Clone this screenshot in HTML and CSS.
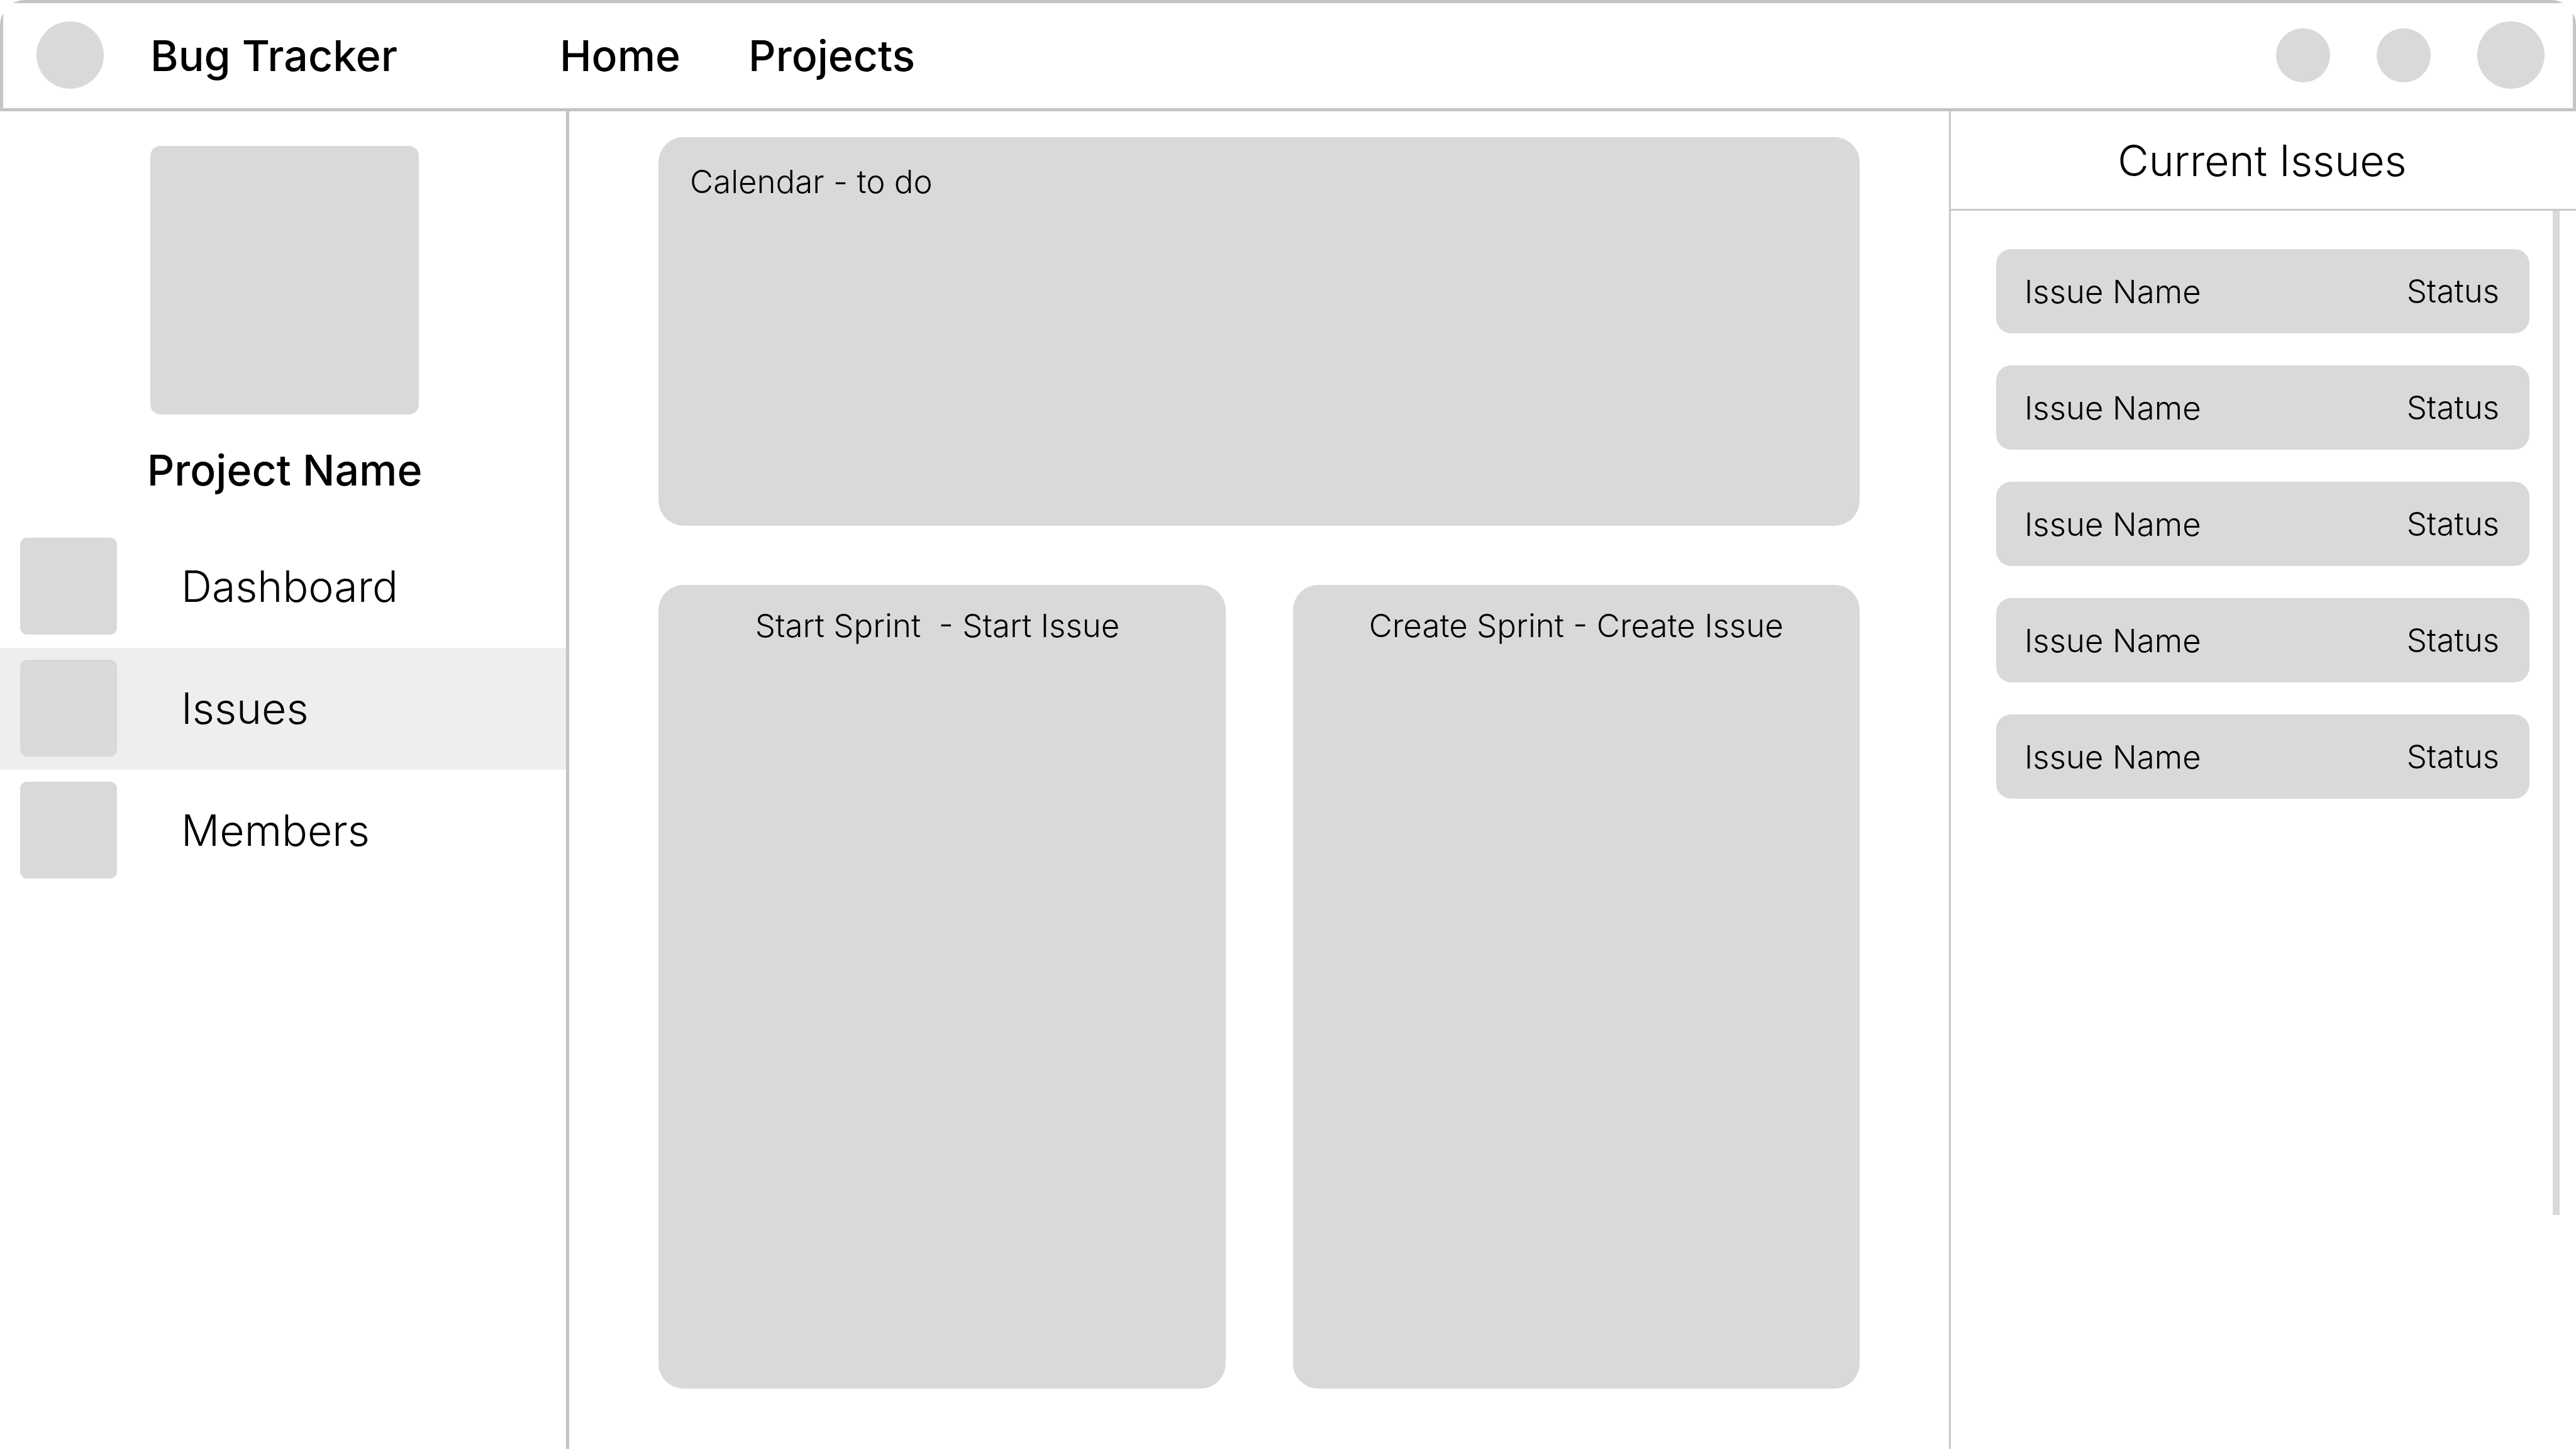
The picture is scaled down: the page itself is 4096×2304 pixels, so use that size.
FILE: index.html
```html
<!DOCTYPE html>
<html lang="en">
<head>
  <meta charset="utf-8">
  <title>Bug Tracker</title>
  <link rel="stylesheet" href="styles.css">
</head>
<body>
  <div class="app">
    <header class="topbar">
      <span class="logo"></span>
      <span class="brand">Bug Tracker</span>
      <nav class="topnav">
        <a class="topnav-link" href="#home">Home</a>
        <a class="topnav-link" href="#projects">Projects</a>
      </nav>
      <div class="actions">
        <button class="round-button" type="button" aria-label="Search"></button>
        <button class="round-button" type="button" aria-label="Notifications"></button>
        <button class="round-button round-button-large" type="button" aria-label="Account"></button>
      </div>
    </header>

    <div class="columns">
      <aside class="sidebar">
        <div class="project">
          <div class="project-picture"></div>
          <h1 class="project-name">Project Name</h1>
        </div>
        <nav class="menu">
          <a class="menu-item" href="#dashboard"><span class="menu-icon"></span>Dashboard</a>
          <a class="menu-item menu-item-active" href="#issues" aria-current="page"><span class="menu-icon"></span>Issues</a>
          <a class="menu-item" href="#members"><span class="menu-icon"></span>Members</a>
        </nav>
      </aside>

      <main class="board">
        <section class="panel panel-calendar">
          <h2 class="panel-title">Calendar - to do</h2>
        </section>
        <div class="panel-row">
          <section class="panel panel-sprint">
            <h2 class="panel-title">Start Sprint&nbsp; - Start Issue&nbsp;</h2>
          </section>
          <section class="panel panel-sprint">
            <h2 class="panel-title">Create Sprint - Create Issue</h2>
          </section>
        </div>
      </main>

      <aside class="issues">
        <h2 class="issues-title">Current Issues</h2>
        <div class="issues-body">
          <ul class="issue-list">
            <li class="issue"><span class="issue-name">Issue Name</span><span>Status</span></li>
            <li class="issue"><span class="issue-name">Issue Name</span><span>Status</span></li>
            <li class="issue"><span class="issue-name">Issue Name</span><span>Status</span></li>
            <li class="issue"><span class="issue-name">Issue Name</span><span>Status</span></li>
            <li class="issue"><span class="issue-name">Issue Name</span><span>Status</span></li>
          </ul>
          <div class="scroll-thumb"></div>
        </div>
      </aside>
    </div>
  </div>
</body>
</html>
```
FILE: styles.css
```css
:root {
  --fill: #d9d9d9;
  --line: #c4c4c4;
  --line-light: #c9c9c9;
  --active: #eeeeee;
  --text-large: 68px;
  --text-small: 51px;
}

* {
  box-sizing: border-box;
}

body {
  margin: 0;
  background: #fff;
  color: #000;
  font-family: Inter, "Liberation Sans", sans-serif;
  font-size: var(--text-large);
  font-weight: 300;
  line-height: 82px;
}

a {
  color: inherit;
  text-decoration: none;
}

h1,
h2,
ul {
  margin: 0;
  padding: 0;
  font: inherit;
  list-style: none;
}

.app {
  display: flex;
  flex-direction: column;
  min-height: 100vh;
}

/* Top bar: rounded outline around a square-cornered white area */
.topbar {
  display: flex;
  align-items: center;
  height: 177px;
  padding: 0 50px 2px 58px;
  border-radius: 40px 40px 0 0;
  background: linear-gradient(#fff, #fff) center / calc(100% - 10px) calc(100% - 10px) no-repeat var(--line);
  font-weight: 500;
}

.logo {
  width: 107px;
  height: 107px;
  border-radius: 50%;
  background: var(--fill);
}

.brand {
  margin-left: 74px;
}

.topnav {
  display: flex;
  gap: 108px;
  margin-left: 258px;
}

.actions {
  display: flex;
  align-items: center;
  gap: 74px;
  margin-left: auto;
}

.round-button {
  width: 86px;
  height: 86px;
  padding: 0;
  border: 0;
  border-radius: 50%;
  background: var(--fill);
}

.round-button-large {
  width: 107px;
  height: 107px;
}

.columns {
  display: grid;
  flex: 1;
  grid-template-columns: 905px 1fr 997px;
}

/* Left column */
.sidebar {
  border-right: 5px solid var(--line);
}

.project {
  display: flex;
  flex-direction: column;
  align-items: center;
  gap: 47px;
  padding: 55px 0 48px 5px;
}

.project-picture {
  width: 427px;
  height: 427px;
  border-radius: 16px;
  background: var(--fill);
}

.project-name {
  font-weight: 500;
}

.menu-item {
  display: flex;
  align-items: center;
  gap: 102px;
  height: 194px;
  padding: 0 32px 2px;
}

.menu-item-active {
  background: var(--active);
}

.menu-icon {
  width: 154px;
  height: 154px;
  border-radius: 11px;
  background: var(--fill);
}

/* Middle column */
.board {
  display: flex;
  flex-direction: column;
  gap: 94px;
  padding: 41px 142px 96px;
}

.panel {
  border-radius: 40px;
  background: var(--fill);
  font-size: var(--text-small);
  line-height: 62px;
}

.panel-calendar {
  height: 618px;
  padding: 40px 50px;
}

.panel-row {
  display: grid;
  flex: 1;
  grid-template-columns: 1fr 1fr;
  gap: 107px;
}

.panel-sprint {
  padding-top: 34px;
  text-align: center;
}

/* Right column */
.issues {
  border-left: 3px solid var(--line-light);
}

.issues-title {
  padding: 37px 4px 36px 0;
  border-bottom: 3px solid var(--line-light);
  text-align: center;
}

.issues-body {
  display: flex;
  gap: 37px;
  padding: 0 26px 0 72px;
}

.issue-list {
  display: flex;
  flex: 1;
  flex-direction: column;
  gap: 51px;
  padding-top: 61px;
}

.issue {
  display: flex;
  align-items: center;
  justify-content: space-between;
  height: 134px;
  padding: 0 48px 0 45px;
  border-radius: 24px;
  background: var(--fill);
  font-size: var(--text-small);
  line-height: 62px;
}

.issue-name {
  padding-top: 2px;
}

.scroll-thumb {
  width: 11px;
  height: 1597px;
  background: var(--fill);
}
```
